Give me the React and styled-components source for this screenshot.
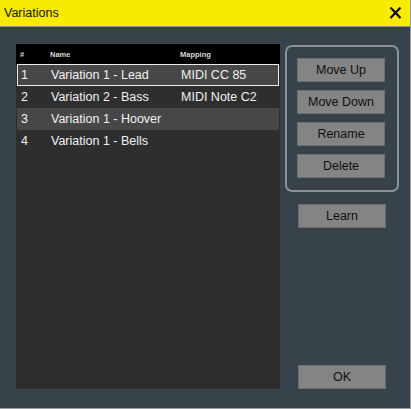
import React from "react";
import styled, { createGlobalStyle } from "styled-components";

const Global = createGlobalStyle`
  html, body { margin: 0; padding: 0; background: #37434b; }
  body { font-family: "Liberation Sans", Arial, sans-serif; }
`;

const Window = styled.div`
  width: 410px;
  height: 408px;
  border-right: 1px solid #9a9d9f;
  border-bottom: 1px solid #9a9d9f;
  background: #37434b;
  display: flex;
  flex-direction: column;
`;

const TitleBar = styled.div`
  height: 26px;
  background: #f8ea00;
  border-bottom: 1px solid #8e918f;
  display: flex;
  align-items: center;
  justify-content: space-between;
  padding: 0 8px 0 4px;
  font-size: 12.5px;
  color: #111;
`;

const Body = styled.div`
  flex: 1;
  display: flex;
  gap: 5px;
  padding: 17px 0 19px 16px;
`;

const Table = styled.div`
  width: 264px;
  background: #2d2d2d;
  display: flex;
  flex-direction: column;
`;

const HeadRow = styled.div`
  height: 20px;
  background: #000;
  display: grid;
  grid-template-columns: 30px 130px 1fr;
  align-items: center;
  padding-left: 4px;
  font-size: 7.5px;
  font-weight: bold;
  color: #d8d8d8;
`;

const Row = styled.div`
  height: 22px;
  box-sizing: border-box;
  margin: 0 1px;
  border: 1px solid ${(p) => (p.selected ? "#ececec" : "transparent")};
  background: ${(p) => (p.light ? "#474747" : "#2e2e2e")};
  display: grid;
  grid-template-columns: 30px 130px 1fr;
  align-items: center;
  padding-left: 3px;
  font-size: 12.5px;
  color: #f2f2f2;
`;

const Side = styled.div`
  width: 114px;
  display: flex;
  flex-direction: column;
  align-items: center;
  padding-top: 1px;
`;

const Group = styled.div`
  width: 114px;
  box-sizing: border-box;
  border: 2px solid #8b9197;
  border-radius: 7px;
  padding: 11px 0 12px 10px;
  display: flex;
  flex-direction: column;
  gap: 8px;
`;

const Button = styled.div`
  width: 88px;
  height: 24px;
  box-sizing: border-box;
  background: #848484;
  border: 1px solid #6d6d6d;
  display: flex;
  align-items: center;
  justify-content: center;
  font-size: 12.5px;
  color: #111;
`;

const Learn = styled(Button)`
  margin-top: 12px;
`;

const Ok = styled(Button)`
  margin-top: auto;
`;

const rows = [
  { n: 1, name: "Variation 1 - Lead", map: "MIDI CC 85" },
  { n: 2, name: "Variation 2 - Bass", map: "MIDI Note C2" },
  { n: 3, name: "Variation 1 - Hoover", map: "" },
  { n: 4, name: "Variation 1 - Bells", map: "" },
];

export default function App() {
  return (
    <>
      <Global />
      <Window>
        <TitleBar>
          <span>Variations</span>
          <svg width="13" height="12" viewBox="0 0 13 12">
            <path d="M1.5 0.5 L11.5 11 M11.5 0.5 L1.5 11" stroke="#000" strokeWidth="2" />
          </svg>
        </TitleBar>
        <Body>
          <Table>
            <HeadRow>
              <span>#</span>
              <span>Name</span>
              <span>Mapping</span>
            </HeadRow>
            {rows.map((r, i) => (
              <Row key={r.n} selected={i === 0} light={i % 2 === 0}>
                <span>{r.n}</span>
                <span>{r.name}</span>
                <span>{r.map}</span>
              </Row>
            ))}
          </Table>
          <Side>
            <Group>
              <Button>Move Up</Button>
              <Button>Move Down</Button>
              <Button>Rename</Button>
              <Button>Delete</Button>
            </Group>
            <Learn>Learn</Learn>
            <Ok>OK</Ok>
          </Side>
        </Body>
      </Window>
    </>
  );
}
